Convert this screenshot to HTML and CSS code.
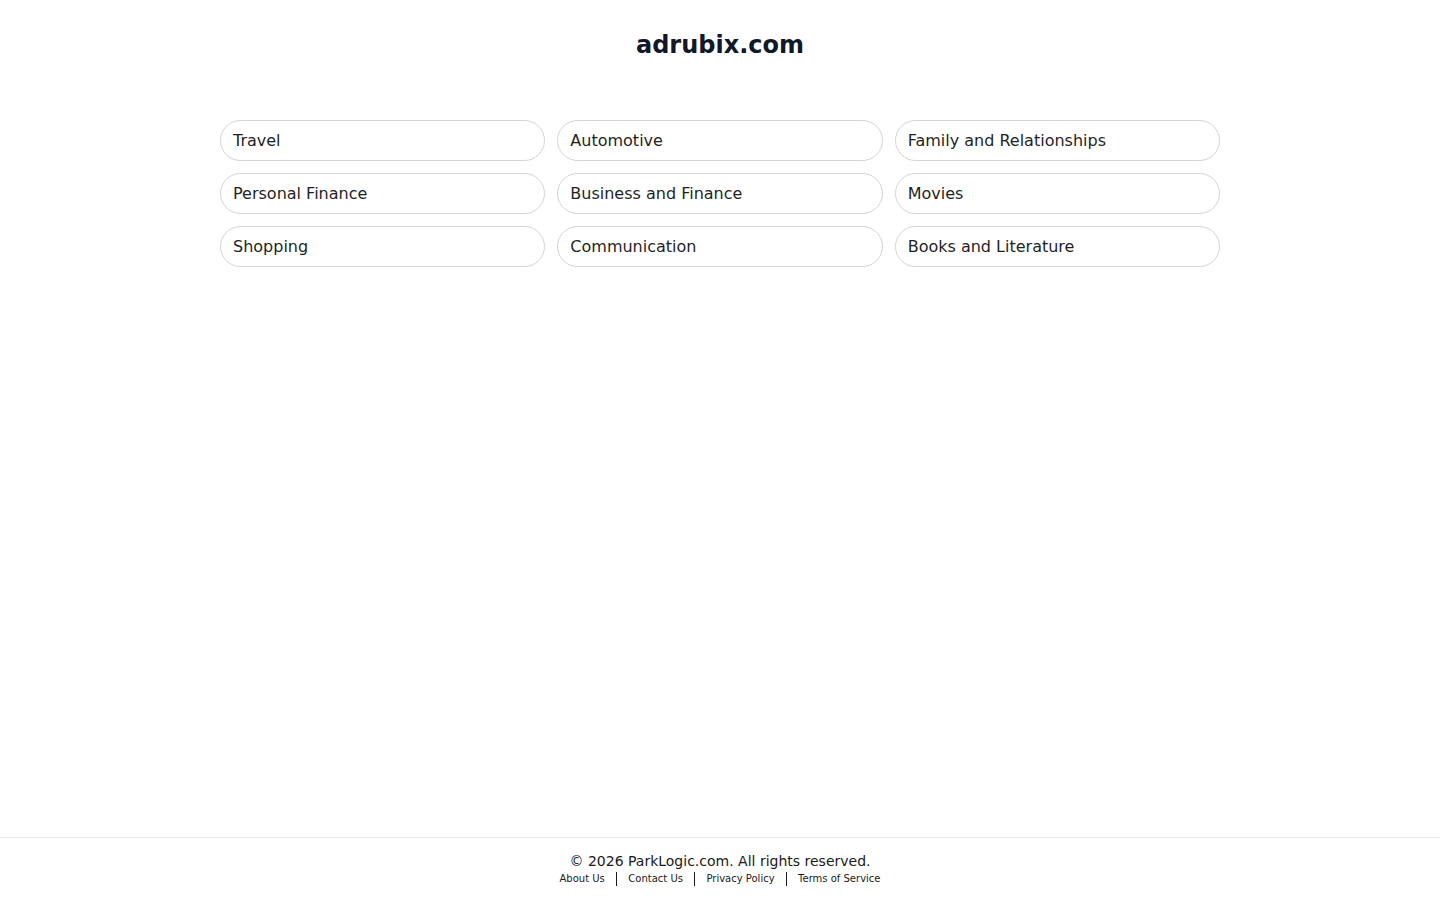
FILE: index.html
```html
<!DOCTYPE html>
<html lang="en">
<head>
<meta charset="utf-8">
<title>adrubix.com</title>
<link rel="stylesheet" href="styles.css">
</head>
<body>
<div class="page">
  <header class="header">
    <h1 class="title">adrubix.com</h1>
  </header>
  <main class="main">
    <div class="grid">
      <a class="pill" href="#">Travel</a>
      <a class="pill" href="#">Automotive</a>
      <a class="pill" href="#">Family and Relationships</a>
      <a class="pill" href="#">Personal Finance</a>
      <a class="pill" href="#">Business and Finance</a>
      <a class="pill" href="#">Movies</a>
      <a class="pill" href="#">Shopping</a>
      <a class="pill" href="#">Communication</a>
      <a class="pill" href="#">Books and Literature</a>
    </div>
  </main>
  <footer class="footer">
    <div class="copy">© 2026 ParkLogic.com. All rights reserved.</div>
    <nav class="links">
      <a class="link" href="#">About Us</a>
      <span class="sep"></span>
      <a class="link" href="#">Contact Us</a>
      <span class="sep"></span>
      <a class="link" href="#">Privacy Policy</a>
      <span class="sep"></span>
      <a class="link" href="#">Terms of Service</a>
    </nav>
  </footer>
</div>
</body>
</html>
```

FILE: styles.css
```css
html, body {
  margin: 0;
  padding: 0;
  background: #ffffff;
  font-family: "DejaVu Sans", "Liberation Sans", sans-serif;
  color: #111827;
}
.page {
  min-height: 100vh;
  display: flex;
  flex-direction: column;
}
.header {
  padding-top: 31px;
  height: 90px;
  box-sizing: border-box;
  display: flex;
  justify-content: center;
}
.title {
  margin: 0;
  font-size: 24px;
  line-height: 28px;
  font-weight: bold;
  color: #111827;
}
.main {
  flex: 1;
  padding-top: 30px;
}
.grid {
  width: 1000px;
  margin: 0 auto;
  display: grid;
  grid-template-columns: repeat(3, 1fr);
  gap: 12px;
}
.pill {
  display: flex;
  align-items: center;
  height: 41px;
  box-sizing: border-box;
  padding: 0 12px;
  border: 1px solid #d4d4d8;
  border-radius: 21px;
  font-size: 16px;
  color: #1f1f1f;
  text-decoration: none;
}
.footer {
  border-top: 1px solid #e5e7eb;
  padding: 15px 0 13px;
  display: flex;
  flex-direction: column;
  align-items: center;
}
.copy {
  font-size: 14px;
  line-height: 17px;
  color: #1a1a1a;
}
.links {
  display: flex;
  align-items: center;
  height: 17px;
}
.link {
  font-size: 10px;
  color: #1a1a1a;
  text-decoration: none;
}
.sep {
  width: 1.5px;
  height: 14px;
  background: #1a1a1a;
  margin: 0 11px;
}
```
